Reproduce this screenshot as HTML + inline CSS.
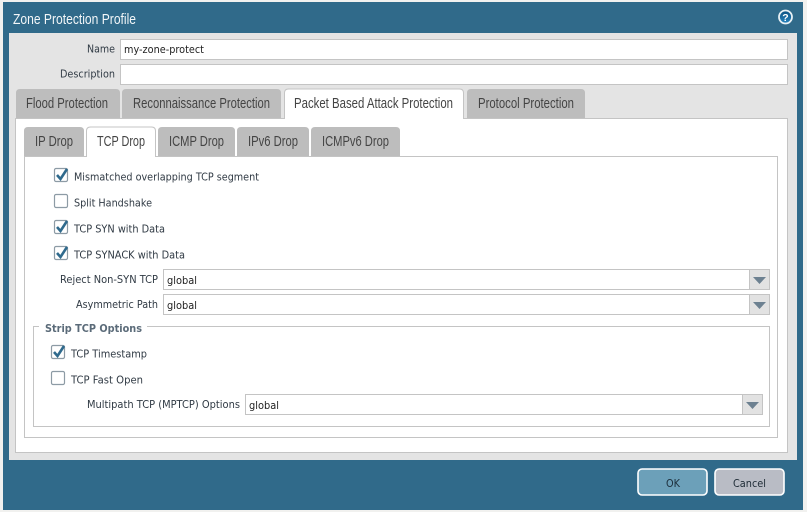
<!DOCTYPE html>
<html>
<head>
<meta charset="utf-8">
<title>Zone Protection Profile</title>
<style>
html,body{margin:0;padding:0;width:807px;height:512px;overflow:hidden;background:#f1f1ef}
svg{display:block}
text{font-family:"Liberation Sans",sans-serif;fill:#333}
.d{font-family:"DejaVu Sans",sans-serif;font-size:11px;fill:#303a44}
.t{font-size:15px;fill:#444}
.box{fill:#fff;stroke:#c4c4c4;stroke-width:1}
.tab{fill:#bdbdbd}
.on{fill:#fff;stroke:#c4c4c4;stroke-width:1}
.cb{fill:#fff;stroke:#8d9ba5;stroke-width:1.2}
.ck{fill:none;stroke:#2f6a8d;stroke-width:2.6}
.ab{fill:#e2e2e2;stroke:#c4c4c4}
.ar{fill:#6d8191}
</style>
</head>
<body>
<svg width="807" height="512" viewBox="0 0 807 512" xmlns="http://www.w3.org/2000/svg">
<defs>
<linearGradient id="h" x1="0" y1="0" x2="0" y2="1"><stop offset="0" stop-color="#0a4f80"/><stop offset="1" stop-color="#2a86c0"/></linearGradient>
</defs>
<rect x="3" y="2" width="800" height="508" fill="#306a8a"/>
<rect x="9" y="33" width="788" height="427" fill="#e4e4e4"/>
<text x="13" y="24" font-size="15" style="fill:#f2f6f8" textLength="123" lengthAdjust="spacingAndGlyphs">Zone Protection Profile</text>

<circle cx="785.500" cy="17" r="6.500" fill="url(#h)" stroke="#e8f0f4" stroke-width="1.800"/>
<text x="785.500" y="21" font-size="10.500" font-weight="bold" text-anchor="middle" style="fill:#fff">?</text>

<text class="d" x="87" y="52.500" textLength="28" lengthAdjust="spacingAndGlyphs">Name</text>
<text class="d" x="60" y="77.500" textLength="55" lengthAdjust="spacingAndGlyphs">Description</text>
<rect class="box" x="120.500" y="39.500" width="667" height="20"/>
<rect class="box" x="120.500" y="64.500" width="667" height="20"/>
<text class="d" x="124" y="53" textLength="80" lengthAdjust="spacingAndGlyphs" style="fill:#222">my-zone-protect</text>

<!-- outer panel -->
<rect class="box" x="15.500" y="118.500" width="772" height="334"/>
<path class="tab" d="M16 118V93q0-4 4-4h96q4 0 4 4v25z"/>
<path class="tab" d="M122 118V93q0-4 4-4h151q4 0 4 4v25z"/>
<path class="on" d="M284.500 119V93q0-4 4-4h171q4 0 4 4v26"/>
<rect x="285" y="117" width="178" height="3" fill="#fff"/>
<path class="tab" d="M467 118V93q0-4 4-4h110q4 0 4 4v25z"/>
<text class="t" x="26" y="108" textLength="82" lengthAdjust="spacingAndGlyphs">Flood Protection</text>
<text class="t" x="133" y="108" textLength="137" lengthAdjust="spacingAndGlyphs">Reconnaissance Protection</text>
<text class="t" x="294" y="108" textLength="159" lengthAdjust="spacingAndGlyphs">Packet Based Attack Protection</text>
<text class="t" x="478" y="108" textLength="96" lengthAdjust="spacingAndGlyphs">Protocol Protection</text>

<!-- inner panel -->
<rect class="box" x="24.500" y="156.500" width="753" height="281"/>
<path class="tab" d="M24 156V131q0-4 4-4h52q4 0 4 4v25z"/>
<path class="on" d="M86.500 157V131q0-4 4-4h61q4 0 4 4v26"/>
<rect x="87" y="155" width="68" height="3" fill="#fff"/>
<path class="tab" d="M158 156V131q0-4 4-4h69q4 0 4 4v25z"/>
<path class="tab" d="M237 156V131q0-4 4-4h64q4 0 4 4v25z"/>
<path class="tab" d="M311 156V131q0-4 4-4h81q4 0 4 4v25z"/>
<text class="t" x="35" y="146" textLength="38" lengthAdjust="spacingAndGlyphs">IP Drop</text>
<text class="t" x="97" y="146" textLength="48" lengthAdjust="spacingAndGlyphs">TCP Drop</text>
<text class="t" x="169" y="146" textLength="55" lengthAdjust="spacingAndGlyphs">ICMP Drop</text>
<text class="t" x="248" y="146" textLength="50" lengthAdjust="spacingAndGlyphs">IPv6 Drop</text>
<text class="t" x="322" y="146" textLength="67" lengthAdjust="spacingAndGlyphs">ICMPv6 Drop</text>

<!-- checkboxes -->
<rect class="cb" x="54.500" y="168.500" width="13" height="13" rx="1.500"/>
<path class="ck" d="M57 175l3.500 4 6.500-10"/>
<rect class="cb" x="54.500" y="194.500" width="13" height="13" rx="1.500"/>
<rect class="cb" x="54.500" y="220.500" width="13" height="13" rx="1.500"/>
<path class="ck" d="M57 227l3.500 4 6.500-10"/>
<rect class="cb" x="54.500" y="246.500" width="13" height="13" rx="1.500"/>
<path class="ck" d="M57 253l3.500 4 6.500-10"/>
<text class="d" x="74" y="180.500" textLength="185" lengthAdjust="spacingAndGlyphs">Mismatched overlapping TCP segment</text>
<text class="d" x="74" y="206.500" textLength="78" lengthAdjust="spacingAndGlyphs">Split Handshake</text>
<text class="d" x="74" y="232.500" textLength="91" lengthAdjust="spacingAndGlyphs">TCP SYN with Data</text>
<text class="d" x="74" y="258.500" textLength="111" lengthAdjust="spacingAndGlyphs">TCP SYNACK with Data</text>

<!-- selects -->
<text class="d" x="60" y="283" textLength="98" lengthAdjust="spacingAndGlyphs">Reject Non-SYN TCP</text>
<text class="d" x="76" y="308" textLength="82" lengthAdjust="spacingAndGlyphs">Asymmetric Path</text>
<rect class="box" x="163.500" y="269.500" width="606" height="20"/>
<rect class="ab" x="749.500" y="269.500" width="20" height="20"/>
<path class="ar" d="M753 277h13l-6.500 7z"/>
<text class="d" x="167" y="284" textLength="30" lengthAdjust="spacingAndGlyphs" style="fill:#222">global</text>
<rect class="box" x="163.500" y="294.500" width="606" height="20"/>
<rect class="ab" x="749.500" y="294.500" width="20" height="20"/>
<path class="ar" d="M753 302h13l-6.500 7z"/>
<text class="d" x="167" y="309" textLength="30" lengthAdjust="spacingAndGlyphs" style="fill:#222">global</text>

<!-- fieldset -->
<path d="M39 326.500H33.500V426.500H769.500V326.500H147" fill="none" stroke="#c4c4c4"/>
<text x="45" y="332" font-size="11" font-weight="bold" textLength="97" lengthAdjust="spacingAndGlyphs" style="font-family:'DejaVu Sans',sans-serif;fill:#5b6b79">Strip TCP Options</text>
<rect class="cb" x="51.500" y="345.500" width="13" height="13" rx="1.500"/>
<path class="ck" d="M54 352l3.500 4 6.500-10"/>
<rect class="cb" x="51.500" y="371.500" width="13" height="13" rx="1.500"/>
<text class="d" x="71" y="357.500" textLength="76" lengthAdjust="spacingAndGlyphs">TCP Timestamp</text>
<text class="d" x="71" y="383.500" textLength="72" lengthAdjust="spacingAndGlyphs">TCP Fast Open</text>
<text class="d" x="87" y="408" textLength="153" lengthAdjust="spacingAndGlyphs">Multipath TCP (MPTCP) Options</text>
<rect class="box" x="245.500" y="394.500" width="517" height="20"/>
<rect class="ab" x="742.500" y="394.500" width="20" height="20"/>
<path class="ar" d="M746 402h13l-6.500 7z"/>
<text class="d" x="249" y="409" textLength="30" lengthAdjust="spacingAndGlyphs" style="fill:#222">global</text>

<!-- buttons -->
<rect x="638" y="469" width="69" height="26" rx="4" fill="#6ca0b9" stroke="#fff" stroke-width="1.600"/>
<rect x="715" y="469" width="69" height="26" rx="4" fill="#b9bcc5" stroke="#fff" stroke-width="1.600"/>
<text class="d" x="666" y="487" textLength="14" lengthAdjust="spacingAndGlyphs" style="fill:#1d2f3c">OK</text>
<text class="d" x="733" y="487" textLength="33" lengthAdjust="spacingAndGlyphs" style="fill:#1d2a35">Cancel</text>
</svg>
</body>
</html>
